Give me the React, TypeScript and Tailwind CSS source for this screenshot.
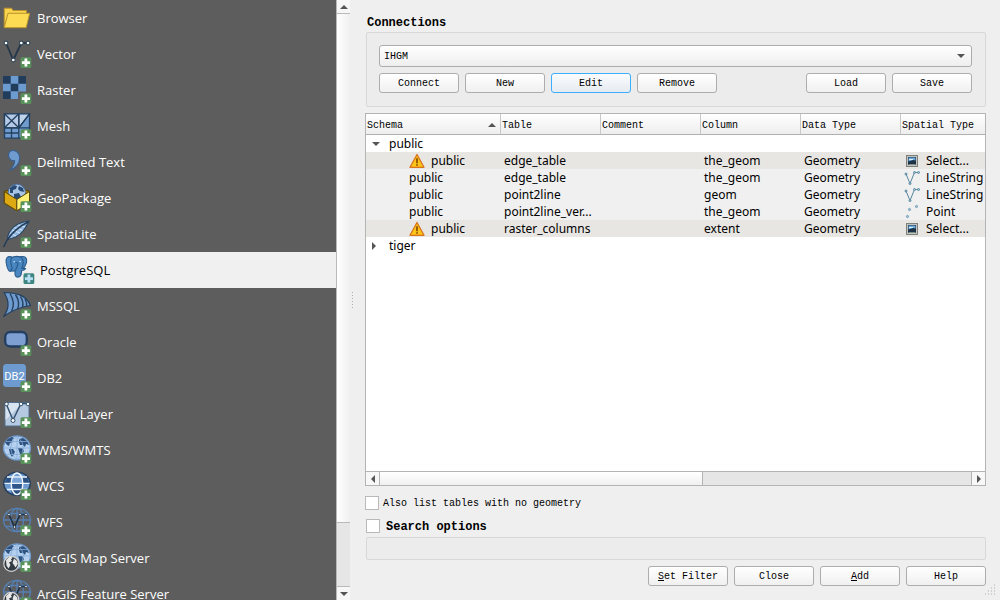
import React from "react";

const NAVY = "#24405f";

function Badge({ teal = false }: { teal?: boolean }) {
  return (
    <g>
      <rect x="20.500" y="21.200" width="10.800" height="10.800" rx="1.500" fill={teal ? "#3f8682" : "#59915b"} />
      <path d="M25.900 22.600v8M21.900 26.600h8" stroke={teal ? "#b9e0f5" : "#fff"} strokeWidth="2.800" />
    </g>
  );
}

const continents =
  "M5 10l3-3 4-2 2 1-2 2 1 2-3 1-1 3-2-1zM9 17l4 0 2 3-3 5-2-3zM19 7l4-1 4 3 2 4-3-1-1 3-2-2-3 0-1-3zM18 16l4 0 2 3-2 4-2-1-1-3z";

function BlueGlobe() {
  return (
    <g>
      <ellipse cx="17" cy="16" rx="13.500" ry="12" fill="#b4d0ee" stroke="#6d97c8" strokeWidth="1.300" />
      <path d={continents} fill="#2d527f" />
      <path d="M3.500 16h27M6 9.500h22M6 22.500h22M17 4v24M17 4q-13 12 0 24M17 4q13 12 0 24" stroke="#85abd8" strokeWidth=".8" fill="none" />
    </g>
  );
}

function WireGlobe() {
  return (
    <g fill="none" stroke="#5580b5" strokeWidth="1.300">
      <ellipse cx="17" cy="16" rx="13.500" ry="11.700" />
      <ellipse cx="17" cy="16" rx="6.500" ry="11.700" />
      <path d="M3.500 16h27M6 9.500h22M6 22.500h22M17 4.500v23" />
      <path d="M9 10.500l5.500 12.500 5.500-12.500h6" stroke="#1f3043" strokeWidth="1.600" />
      <g fill="#fff" stroke="#1f3043" strokeWidth=".8">
        <circle cx="9" cy="10.500" r="1.200" />
        <circle cx="14.500" cy="23" r="1.200" />
        <circle cx="20" cy="10.500" r="1.200" />
        <circle cx="26" cy="10.500" r="1.200" />
      </g>
    </g>
  );
}

function ArcMark() {
  return (
    <g>
      <circle cx="11.300" cy="23.800" r="7.500" fill="#303a42" stroke="#d4d4d4" strokeWidth="1.200" />
      <path d="M6 20l4-3.500 2.500 1-1.500 2 1 1.500-3 1.500 1.500 2.500-2 3.500-2-3zM14 18.500l3 2.500.8 3-2.300 3.500-1.500-2.500-1.500-2z" fill="#e6e6e6" />
    </g>
  );
}

const art: Record<string, React.ReactNode> = {
  Browser: (
    <g stroke="#b8922b" strokeLinejoin="round">
      <path d="M4.200 27.500V8.200h7.300l1.500 2.300h13.500v3" fill="#fbd44d" />
      <path d="M4.200 27.700L8 13.300h21.700l-3.500 14.400z" fill="#fddc54" />
    </g>
  ),
  Vector: (
    <g>
      <path d="M6 7l7.300 17L21.300 7H28" fill="none" stroke="#26384a" strokeWidth="1.900" />
      <g fill="#fff" stroke="#33475a" strokeWidth="1.100">
        <circle cx="6" cy="7" r="1.900" />
        <circle cx="21.300" cy="7" r="1.900" />
        <circle cx="28" cy="7" r="1.900" />
        <circle cx="13.300" cy="24" r="1.900" />
      </g>
    </g>
  ),
  Raster: (
    <g>
      <path d="M3 4h23v15.500h-8V27H3z" fill="#6c9bcf" />
      <path d="M3 4h7.700v7.700H3zM18.300 4H26v7.700h-7.700zM10.700 11.700h7.600v7.600h-7.600zM3 19.300h7.700V27H3z" fill="#223c5c" />
    </g>
  ),
  Mesh: (
    <g stroke={NAVY} strokeWidth="1.300">
      <path d="M4.500 5.800h25v24.400h-25z" fill="#6f9bcf" />
      <path d="M4.500 5.800h14.300v14H4.500z" fill="#b4cae6" />
      <path d="M18.800 19.800v-14h10.700z" fill="#bed2ea" />
      <path d="M4.500 5.800l14.300 14M18.800 5.800l-14.300 14M18.800 5.800v24.400M4.500 19.800h25M18.800 19.800l10.700-14M11.500 19.800v10.400M4.500 25h14.300" fill="none" />
    </g>
  ),
  "Delimited Text": (
    <path d="M8.500 11C8.500 6.500 13 5.500 16 7.200C21 10 20.500 17 17 21.300C14.800 24 12 25.500 9.800 26.300C13 22.500 14.800 19.500 14.500 16.700C11.500 17.500 8.500 15 8.500 11z" fill="#6f9bcf" stroke="#3a5f8c" strokeWidth="1.200" />
  ),
  GeoPackage: (
    <g strokeLinejoin="round">
      <path d="M4.300 11.500l12.500-5 12.700 5v11.500l-12.700 7.700-12.500-7.700z" fill="#a87b00" stroke="#54430a" />
      <circle cx="16.800" cy="12.800" r="8.700" fill="#a7c4e4" stroke="#496e9d" />
      <path d="M10 8l4-3 3 1-1 3-3 1 0 3-3 0zM19 6l4 2 1 4-4-1-2-2zM14 14l5-1 2 4-3 3-4-2z" fill="#294a73" />
      <path d="M4.300 11.500l12.500 8v11.200l-12.500-7.700z" fill="#dca914" stroke="#5b480b" />
      <path d="M29.500 11.500l-12.700 8v11.200l12.700-7.700z" fill="#fff075" stroke="#5b480b" />
    </g>
  ),
  SpatiaLite: (
    <g strokeLinejoin="round">
      <path d="M29.200 5C20 6 13 10 9.500 16c-1.500 2.500-2 5-1.800 7.500C15 22 20 19 23 15c3-4 4-6 6.200-10z" fill="#94b8de" stroke="#26425f" strokeWidth="1.100" />
      <path d="M12 14l8 3M14.500 11.500l8 2.500M18 9l7 2M10 17l6 3" stroke="#dfeeff" strokeWidth=".8" />
      <path d="M28 6C20 10 12 17 7.500 23.500L3.500 31" fill="none" stroke="#223d59" strokeWidth="1.500" />
    </g>
  ),
  PostgreSQL: (
    <g fill="#4a87c0" stroke="#285b8e" strokeWidth="1.100" strokeLinejoin="round">
      <path d="M9 5C4 3.500 2.500 6.500 3.200 11c.8 4.500 2.300 8.500 4.300 8.500 1.500 0 2.500-2.500 3.500-3.500z" />
      <path d="M17 4.800C22 3.500 24.500 6 23.600 10c-.7 3-2.500 6-4.600 7.500z" />
      <path d="M8.500 6c2-2 8.500-2.300 10.500.3 1.500 2 1.500 6-.3 10.200l4 0c-1 1.500-2.500 2-4 2-.5 3 0 6-3 6.500-3.500.6-4-2-3.700-6.500-1.500.8-3.500.5-4.300-.5 2-.7 1.500-2 .8-4-.7-2.500-1-6 0-8z" />
      <path d="M12.500 11c1-.8 2-.6 2.500.5 0 2-1.500 3.500-2.500 7" fill="none" />
      <path d="M10.500 9.800h1.500M16.500 9.500h1.300" stroke="#d8ecff" />
    </g>
  ),
  MSSQL: (
    <g strokeLinejoin="round" stroke={NAVY}>
      <path d="M4 4.500C15 5 26 6 30.500 17.500C21 19 11 23 3.500 28.500C10 20 9 12 4 4.500z" fill="#6f9bcf" strokeWidth="1.200" />
      <path d="M10 5.500c4 6.500 4.500 12 1.500 18M15.500 6.500c3.500 5.500 4 10 2 14.500M20.500 8.500c2.500 4 3 7 2 10.500M25 11c1.500 2.500 2 4.500 1.500 7" fill="none" strokeWidth="1.400" />
    </g>
  ),
  Oracle: <rect x="5.200" y="8" width="21.600" height="14.500" rx="5" fill="#7d9fd2" stroke="#233e61" strokeWidth="2.300" />,
  DB2: (
    <g>
      <rect x="3" y="4" width="23" height="23" rx="3.500" fill="#6e9bcf" />
      <text x="14.500" y="20" textAnchor="middle" fill="#fff" fontSize="11" fontFamily="Roboto, sans-serif">DB2</text>
    </g>
  ),
  "Virtual Layer": (
    <g>
      <path d="M5 6.500h24V30H5z" fill="#b5c9e0" stroke="#536e8e" />
      <path d="M5.500 7h17L5.500 24z" fill="#d9e4f1" />
      <path d="M6 7.500l7 16.500 8-16.500h7" fill="none" stroke="#35536f" strokeWidth="1.500" />
      <g fill="#fff" stroke="#35536f">
        <circle cx="6.500" cy="8" r="1.800" />
        <circle cx="21" cy="8" r="1.800" />
        <circle cx="28" cy="8" r="1.800" />
        <circle cx="13" cy="24.500" r="2" />
      </g>
    </g>
  ),
  "WMS/WMTS": <BlueGlobe />,
  WCS: (
    <g>
      <ellipse cx="17" cy="15.800" rx="13.200" ry="11.500" fill="#6e9bcf" stroke="#26405f" strokeWidth="1.600" />
      <path d="M7 9.300h20l2.500 5.700H4.500zM11.500 21.500h11V26h-11z" fill="#2b5080" />
      <path d="M12 9.300h10v5.700H12z" fill="#7ba5d6" />
      <path d="M11.500 15.500h11v5.500h-11z" fill="#2f568a" />
      <path d="M4.500 15.300h25M7 9h20M7 21.500h20" stroke="#e9f2fc" strokeWidth="1.300" />
      <ellipse cx="17" cy="15.800" rx="5.800" ry="10.800" fill="none" stroke="#f0f6ff" strokeWidth="1.400" />
    </g>
  ),
  WFS: <WireGlobe />,
  "ArcGIS Map Server": (
    <g>
      <BlueGlobe />
      <ArcMark />
    </g>
  ),
  "ArcGIS Feature Server": (
    <g>
      <WireGlobe />
      <ArcMark />
    </g>
  ),
};

const sources = Object.keys(art);

function Sidebar() {
  return (
    <nav className="min-h-0 w-[336px] shrink-0 overflow-hidden bg-[#5d5d5d] font-['Open_Sans',sans-serif] text-[13px]">
      {sources.map((name) => {
        const active = name === "PostgreSQL";
        return (
          <button
            key={name}
            type="button"
            aria-current={active ? "page" : undefined}
            className={
              active
                ? "flex h-9 w-full items-center bg-[#f0f0f0] pl-[3px] text-left text-black"
                : "flex h-9 w-full items-center text-left text-white"
            }
          >
            <svg aria-hidden="true" className="shrink-0" width="37" height="36" viewBox="0 0 37 36">
              {art[name]}
              {name !== "Browser" && <Badge teal={active} />}
            </svg>
            <span className="pt-0.5">{name}</span>
          </button>
        );
      })}
    </nav>
  );
}

const arrowPaths = {
  up: "M0 4L4 0l4 4z",
  down: "M0 0h8L4 4z",
  left: "M4 0v8L0 4z",
  right: "M0 0v8l4-4z",
};

function Arrow({ dir }: { dir: keyof typeof arrowPaths }) {
  const wide = dir === "up" || dir === "down";
  return (
    <svg aria-hidden="true" width={wide ? 8 : 4} height={wide ? 4 : 8} className="shrink-0">
      <path d={arrowPaths[dir]} fill="#555" />
    </svg>
  );
}

function SidebarScroll() {
  return (
    <div className="flex w-3.5 shrink-0 flex-col border-l border-[#b9b9b9] bg-[#e6e6e6]">
      <button type="button" aria-label="Scroll up" className="flex h-3.5 items-center justify-center border-b border-[#b9b9b9] bg-[#f7f7f7]">
        <Arrow dir="up" />
      </button>
      <div className="flex-[509] border-b border-[#b9b9b9] bg-linear-to-r from-white to-[#f0f0f0]" />
      <div className="flex-[63]" />
      <button type="button" aria-label="Scroll down" className="flex h-3.5 items-center justify-center border-t border-[#b9b9b9] bg-[#f7f7f7]">
        <Arrow dir="down" />
      </button>
    </div>
  );
}

function Button({ children, focused = false }: { children: React.ReactNode; focused?: boolean }) {
  return (
    <button
      type="button"
      className={
        focused
          ? "h-5 w-20 rounded-[3px] border border-[#3daefd] bg-linear-to-b from-[#fafcfe] to-[#e6ebf1] pt-0.5 leading-4"
          : "h-5 w-20 rounded-[3px] border border-[#adadad] bg-linear-to-b from-white to-[#f0f0f0] pt-0.5 leading-4"
      }
    >
      {children}
    </button>
  );
}

function Connections() {
  return (
    <section aria-labelledby="connections" className="ml-px">
      <h2 id="connections" className="h-5 pt-px pl-px text-[12px] leading-5 font-bold">Connections</h2>
      <div className="rounded-[2px] border border-[#d8d8d8] bg-[#ececec] pt-3 pr-[13px] pb-[13px] pl-3">
        <div className="relative">
          <select
            aria-label="Connection"
            defaultValue="IHGM"
            className="block h-[22px] w-full appearance-none rounded-[3px] border border-[#adadad] bg-linear-to-b from-white to-[#eeeeee] px-1"
          >
            <option>IHGM</option>
          </select>
          <span className="pointer-events-none absolute top-[9px] right-[7px] flex">
            <Arrow dir="down" />
          </span>
        </div>
        <div className="mt-1.5 flex gap-1.5">
          <Button>Connect</Button>
          <Button>New</Button>
          <Button focused>Edit</Button>
          <Button>Remove</Button>
          <span className="flex-1" />
          <Button>Load</Button>
          <Button>Save</Button>
        </div>
      </div>
    </section>
  );
}

function Warning() {
  return (
    <svg role="img" aria-label="Warning" width="16" height="16" viewBox="0 0 16 16" className="shrink-0">
      <path d="M8 1.500L15 14.300H1z" fill="#fcc419" stroke="#d9731c" strokeWidth="1.300" strokeLinejoin="round" />
      <path d="M8 5.200v5M8 11.300v1.500" stroke="#8a4b00" strokeWidth="1.700" />
    </svg>
  );
}

type Geometry = "Select..." | "LineString" | "Point";

function GeometryIcon({ kind }: { kind: Geometry }) {
  return (
    <svg aria-hidden="true" width="16" height="16" viewBox="0 0 16 16" className="shrink-0">
      {kind === "Select..." && (
        <g>
          <rect x="2.500" y="2.500" width="11" height="11" fill="#c4c5c2" stroke="#7d807b" />
          <path d="M4 4h8v8H4z" fill="#1d3247" />
          <path d="M4.500 4.500h7v3L9 7 4.500 8.500z" fill="#6aa9dd" />
          <path d="M5 6.500h4" stroke="#d8ebf8" />
          <path d="M4.500 11.500h7" stroke="#7c8f86" />
        </g>
      )}
      {kind === "LineString" && (
        <g fill="#a9cbdc" stroke="#5886a0">
          <path d="M2 4l4 9.500 4.500-11H15" fill="none" />
          <circle cx="2" cy="4" r="1" />
          <circle cx="6" cy="13.500" r="1" />
          <circle cx="10.500" cy="2.500" r="1" />
          <circle cx="14.500" cy="2.500" r="1" />
        </g>
      )}
      {kind === "Point" && (
        <g fill="#9fc5dc" stroke="#6390aa" strokeWidth=".8">
          <circle cx="3.500" cy="12.500" r="1.100" />
          <circle cx="5.500" cy="5.500" r="1.100" />
          <circle cx="12.500" cy="2.500" r="1.100" />
        </g>
      )}
    </svg>
  );
}

const layers: { table: string; column: string; kind: Geometry }[] = [
  { table: "edge_table", column: "the_geom", kind: "Select..." },
  { table: "edge_table", column: "the_geom", kind: "LineString" },
  { table: "point2line", column: "geom", kind: "LineString" },
  { table: "point2line_ver...", column: "the_geom", kind: "Point" },
  { table: "raster_columns", column: "extent", kind: "Select..." },
];

const headings = ["Table", "Comment", "Column", "Data Type", "Spatial Type"];

function SchemaRow({ name, open }: { name: string; open: boolean }) {
  return (
    <tr className="h-[17px]">
      <td colSpan={6} className="p-0">
        <div className="flex h-[17px] items-center pl-1.5">
          <button type="button" aria-label={"Toggle " + name} aria-expanded={open} className="flex w-[17px] items-center">
            <Arrow dir={open ? "down" : "right"} />
          </button>
          {name}
        </div>
      </td>
    </tr>
  );
}

function LayerTable() {
  return (
    <div className="mt-1.5 flex min-h-0 flex-1 flex-col border border-[#b4b4b4] bg-white">
      <div className="min-h-0 flex-1 overflow-hidden">
        <table className="w-full table-fixed border-separate border-spacing-0 font-['Noto_Sans','Open_Sans',sans-serif] text-[12px] leading-[17px] whitespace-nowrap">
          <colgroup>
            <col className="w-[134px]" />
            <col className="w-[100px]" />
            <col className="w-[100px]" />
            <col className="w-[100px]" />
            <col className="w-[100px]" />
            <col />
          </colgroup>
          <thead>
            <tr className="h-[21px] bg-linear-to-b from-white to-[#ededed] font-['Liberation_Mono',monospace] text-[10px]">
              <th className="border-b border-b-[#b0b0b0] p-0 pt-0.5 pl-px text-left font-normal">
                <div className="flex items-center justify-between pr-1">
                  Schema
                  <Arrow dir="up" />
                </div>
              </th>
              {headings.map((h) => (
                <th key={h} className="border-b border-l border-b-[#b0b0b0] border-l-[#c8c8c8] p-0 pt-0.5 pl-px text-left font-normal">{h}</th>
              ))}
            </tr>
          </thead>
          <tbody>
            <SchemaRow name="public" open />
            {layers.map((layer, i) => {
              const warn = layer.kind === "Select...";
              return (
                <tr key={i} className={warn ? "h-[17px] bg-[#e8e6e2]" : "h-[17px] bg-[#f0f0f0]"}>
                  <td className="p-0 pl-[43px]">
                    <div className="flex h-[17px] items-center gap-1.5">
                      {warn && <Warning />}
                      public
                    </div>
                  </td>
                  <td className="p-0 pl-1">{layer.table}</td>
                  <td className="p-0" />
                  <td className="p-0 pl-1">{layer.column}</td>
                  <td className="p-0 pl-1">Geometry</td>
                  <td className="p-0 pl-1">
                    <div className="flex h-[17px] items-center gap-1.5">
                      <GeometryIcon kind={layer.kind} />
                      {layer.kind}
                    </div>
                  </td>
                </tr>
              );
            })}
            <SchemaRow name="tiger" open={false} />
          </tbody>
        </table>
      </div>
      <div className="flex h-3.5 shrink-0 border-t border-[#b4b4b4] bg-[#e6e6e6]">
        <button type="button" aria-label="Scroll left" className="flex w-3.5 items-center justify-center border-r border-[#b4b4b4] bg-[#f7f7f7]">
          <Arrow dir="left" />
        </button>
        <div className="flex-[323] border-r border-[#b4b4b4] bg-linear-to-b from-white to-[#f0f0f0]" />
        <div className="flex-[268]" />
        <button type="button" aria-label="Scroll right" className="flex w-3.5 items-center justify-center border-l border-[#b4b4b4] bg-[#f7f7f7]">
          <Arrow dir="right" />
        </button>
      </div>
    </div>
  );
}

const box = "size-3.5 appearance-none border border-[#b9b9b9] bg-white checked:bg-[#3daefd]";

export default function App() {
  return (
    <div className="flex h-screen overflow-hidden bg-[#efefef] text-black">
      <Sidebar />
      <SidebarScroll />
      <div aria-hidden="true" className="flex w-[15px] shrink-0 flex-col items-start justify-center gap-0.5 pl-0.5">
        {[0, 1, 2, 3, 4, 5].map((n) => (
          <span key={n} className="size-px bg-[#b0b0b0]" />
        ))}
      </div>
      <main className="relative flex min-w-0 flex-1 flex-col pt-3 pr-3.5 pb-3.5 font-['Liberation_Mono',monospace] text-[10px]">
        <Connections />
        <LayerTable />
        <label className="mt-[9px] flex items-center gap-1 leading-[14px]">
          <input type="checkbox" className={box} />
          <span className="pt-0.5">Also list tables with no geometry</span>
        </label>
        <label className="mt-[7px] ml-px flex items-center gap-1.5 text-[12px] leading-[14px] font-bold">
          <input type="checkbox" className={box} />
          <span className="pt-0.5">Search options</span>
        </label>
        <div className="mt-[3px] ml-px h-[23px] shrink-0 rounded-[2px] border border-[#d8d8d8] bg-[#ececec]" />
        <div className="mt-1.5 flex justify-end gap-1.5">
          <Button><u>S</u>et Filter</Button>
          <Button>Close</Button>
          <Button><u>A</u>dd</Button>
          <Button>Help</Button>
        </div>
        <svg aria-hidden="true" className="absolute right-1 bottom-1" width="12" height="12">
          <path d="M10 1h1M7 4h1M10 4h1M4 7h1M7 7h1M10 7h1M1 10h1M4 10h1M7 10h1M10 10h1" stroke="#b0b0b0" />
        </svg>
      </main>
    </div>
  );
}
